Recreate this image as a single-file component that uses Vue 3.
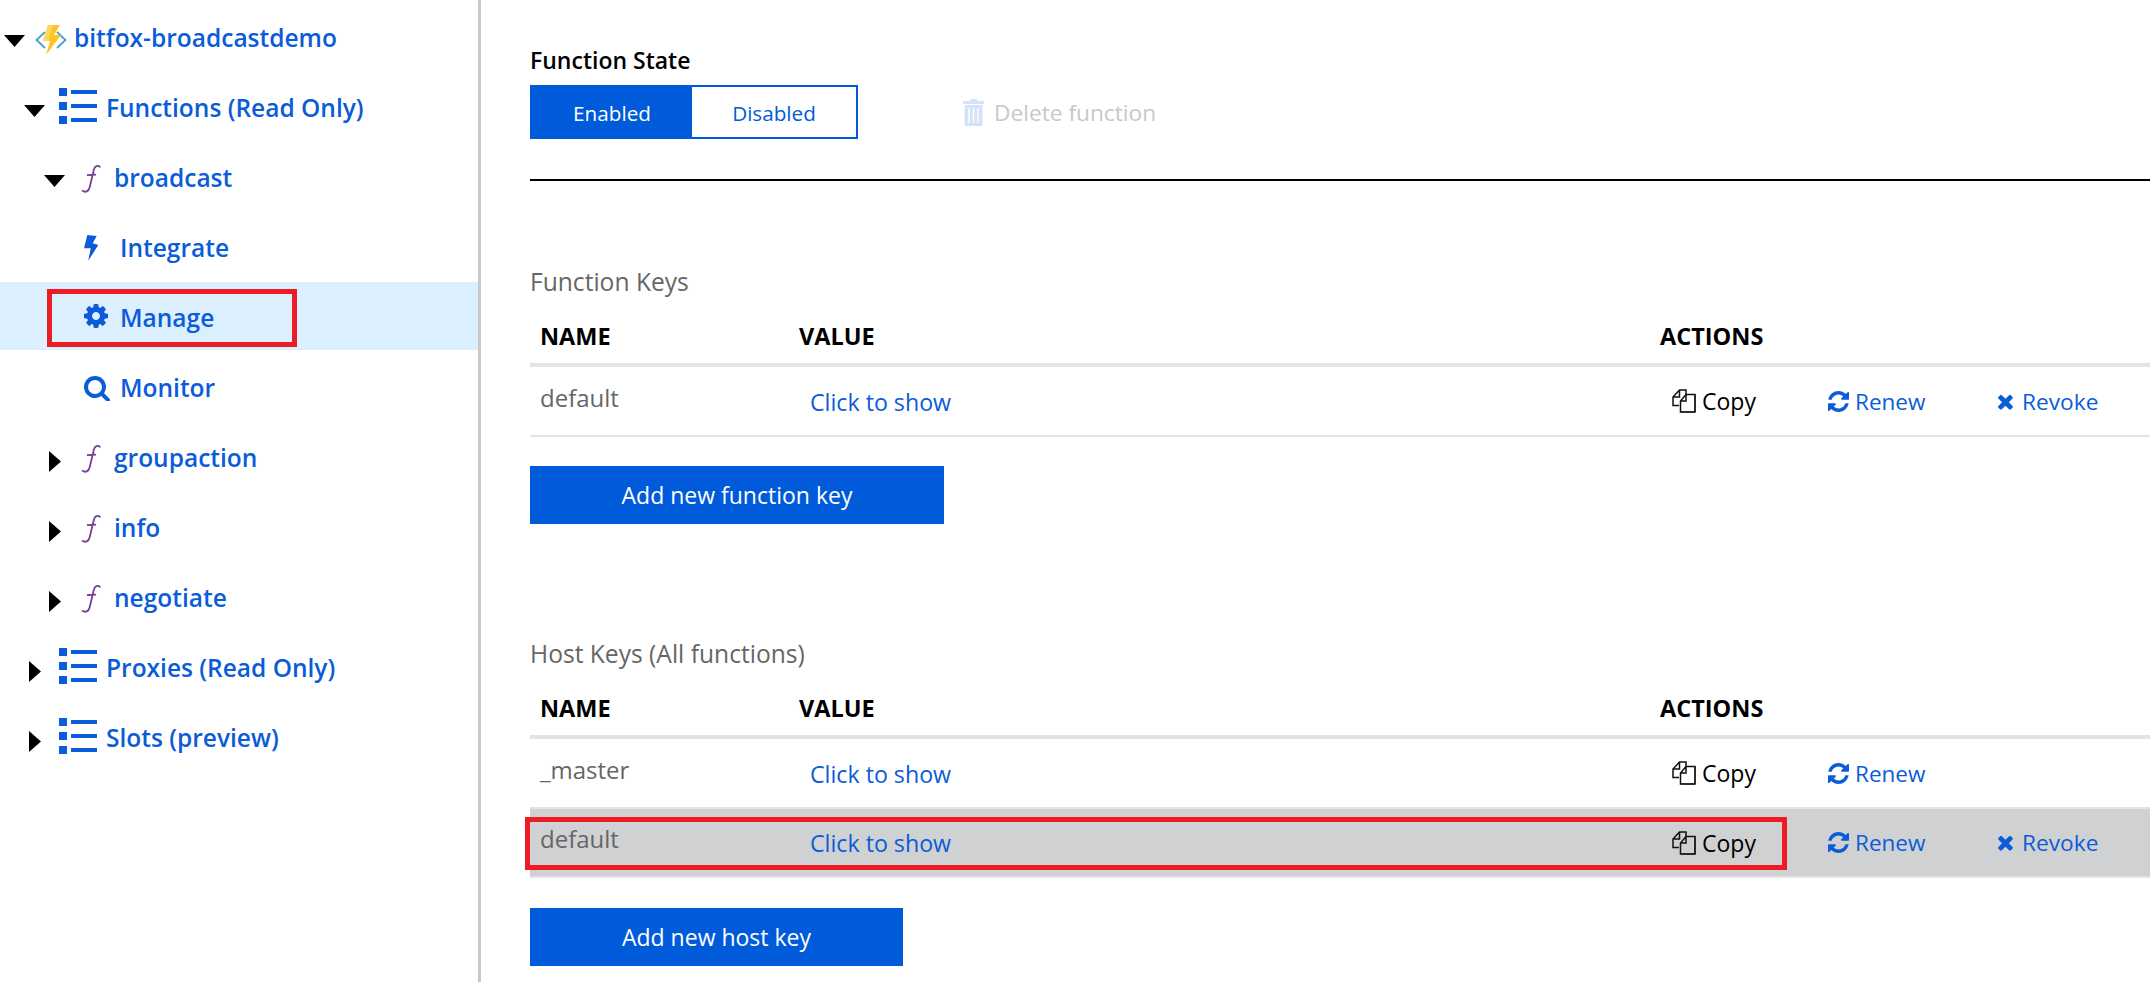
<template>
  <div class="page">
    <aside class="sidebar">
      <div
        v-for="item in tree"
        :key="item.label"
        class="tree-row"
        :class="[`depth-${item.depth}`, { selected: item.selected }]"
      >
        <span v-if="item.open !== undefined" class="caret">
          <svg v-if="item.open" width="21" height="12" viewBox="0 0 21 12"><path d="M0 0h21L10.500 12z" /></svg>
          <svg v-else width="12" height="21" viewBox="0 0 12 21"><path d="M0 0l12 10.500L0 21z" /></svg>
        </span>

        <svg v-if="item.icon === 'app'" class="icon-app" viewBox="0 0 32 30">
          <path d="M10 7L1.500 15l8.500 8M22 7l8.500 8-8.500 8" fill="none" stroke="#4aa0cf" stroke-width="1.800" />
          <path d="M13 0h12l-6 10h7L11 30l4-14H8z" fill="#fcc526" />
          <path d="M13 0h5l-5 16H8z" fill="#fdd85c" />
        </svg>
        <svg v-else-if="item.icon === 'list'" class="icon-list" viewBox="0 0 38 36">
          <path d="M0 0h8v8H0zM0 14h8v8H0zM0 28h8v8H0zM12 2h26v4H12zM12 16h26v4H12zM12 30h26v4H12z" />
        </svg>
        <svg v-else-if="item.icon === 'fn'" class="icon-fn" viewBox="0 0 20 28">
          <path d="M19.500 2.200C16.500-.2 13.800 1 12.800 5L8.600 22.500C7.600 26.500 4.600 28 1 25.600M6 10.200l9-.6" fill="none" stroke="#7a3f96" stroke-width="1.800" />
        </svg>
        <svg v-else-if="item.icon === 'bolt'" class="icon-bolt" viewBox="0 0 15 26">
          <path d="M3.300 0l9.400 1-4 7.300 5.600 1.700-10 15.700 2.400-12.400H0z" />
        </svg>
        <svg v-else-if="item.icon === 'gear'" class="icon-gear" viewBox="128 128 1536 1536"><path :d="gearPath" /></svg>
        <svg v-else-if="item.icon === 'search'" class="icon-search" viewBox="64 64 1664 1664"><path :d="searchPath" /></svg>

        <span class="tree-label">{{ item.label }}</span>
        <span v-if="item.selected" class="callout manage-callout"></span>
      </div>
    </aside>

    <main class="content">
      <section class="state">
        <h3 class="state-title">Function State</h3>
        <div class="state-controls">
          <div class="toggle">
            <span class="toggle-on">Enabled</span>
            <span class="toggle-off">Disabled</span>
          </div>
          <span class="delete">
            <svg class="delete-icon" viewBox="0 0 21 27">
              <path d="M7 0h7v2h7v3H0V2h7zM1.500 6h18v19.500a1.500 1.500 0 0 1-1.500 1.500H3a1.500 1.500 0 0 1-1.500-1.500z" fill="#d3e3f9" />
              <path d="M6 9v15M10.500 9v15M15 9v15" stroke="#fff" stroke-width="1.400" />
            </svg>
            Delete function
          </span>
        </div>
      </section>

      <section v-for="group in groups" :key="group.title" class="keys" :class="group.cls">
        <h4 class="keys-title">{{ group.title }}</h4>
        <div class="key-row key-head">
          <div class="cell-name">NAME</div>
          <div class="cell-value">VALUE</div>
          <div class="cell-actions">ACTIONS</div>
        </div>
        <div
          v-for="row in group.rows"
          :key="row.name"
          class="key-row key-body"
          :class="{ active: row.active }"
        >
          <div class="cell-name">{{ row.name }}</div>
          <div class="cell-value"><a class="link">Click to show</a></div>
          <div class="cell-actions">
            <span class="action copy">
              <svg class="icon-copy" viewBox="0 0 24 24">
                <path d="M7 16.500H1V8l6.500-7H14v4.500M7.500 1v7H1" fill="none" stroke="#111" stroke-width="1.500" />
                <path d="M14 5.500h9V23H8.500V12zM14 5.500V12H8.500" fill="none" stroke="#111" stroke-width="1.500" />
                <path d="M9 23h14V6" fill="none" stroke="#111" stroke-width="1" />
              </svg>
              Copy
            </span>
            <span class="action renew">
              <svg class="icon-renew" viewBox="128 128 1536 1536"><path :d="refreshPath" /></svg>
              Renew
            </span>
            <span v-if="row.revoke" class="action revoke">
              <svg class="icon-revoke" viewBox="220 220 1360 1360"><path :d="closePath" /></svg>
              Revoke
            </span>
          </div>
          <span v-if="row.active" class="callout row-callout"></span>
        </div>
        <button class="add-button">{{ group.button }}</button>
      </section>
    </main>
  </div>
</template>

<script setup>
const tree = [
  { label: 'bitfox-broadcastdemo', depth: 0, open: true, icon: 'app' },
  { label: 'Functions (Read Only)', depth: 1, open: true, icon: 'list' },
  { label: 'broadcast', depth: 2, open: true, icon: 'fn' },
  { label: 'Integrate', depth: 3, icon: 'bolt' },
  { label: 'Manage', depth: 3, icon: 'gear', selected: true },
  { label: 'Monitor', depth: 3, icon: 'search' },
  { label: 'groupaction', depth: 2, open: false, icon: 'fn' },
  { label: 'info', depth: 2, open: false, icon: 'fn' },
  { label: 'negotiate', depth: 2, open: false, icon: 'fn' },
  { label: 'Proxies (Read Only)', depth: 1, open: false, icon: 'list' },
  { label: 'Slots (preview)', depth: 1, open: false, icon: 'list' },
]

const groups = [
  {
    title: 'Function Keys',
    cls: 'function-keys',
    button: 'Add new function key',
    rows: [{ name: 'default', revoke: true }],
  },
  {
    title: 'Host Keys (All functions)',
    cls: 'host-keys',
    button: 'Add new host key',
    rows: [
      { name: '_master', revoke: false },
      { name: 'default', revoke: true, active: true },
    ],
  },
]

const gearPath = 'M1152 896q0-106-75-181t-181-75-181 75-75 181 75 181 181 75 181-75 75-181zm512-109v222q0 12-8 23t-20 13l-185 28q-19 54-39 91 35 50 107 138 10 12 10 25t-9 23q-27 37-99 108t-94 71q-12 0-26-9l-138-108q-44 23-91 38-16 136-29 186-7 28-36 28h-222q-14 0-24.500-8.500t-11.500-21.500l-28-184q-49-16-90-37l-141 107q-10 9-25 9-14 0-25-11-126-114-165-168-7-10-7-23 0-12 8-23 15-21 51-66.500t54-70.500q-27-50-41-99l-183-27q-13-2-21-12.500t-8-23.500v-222q0-12 8-23t19-13l186-28q14-46 39-92-40-57-107-138-10-12-10-24 0-10 9-23 26-36 98.500-107.500t94.500-71.500q13 0 26 10l138 107q44-23 91-38 16-136 29-186 7-28 36-28h222q14 0 24.500 8.500t11.500 21.500l28 184q49 16 90 37l142-107q9-9 24-9 13 0 25 10 129 119 165 170 7 8 7 22 0 12-8 23-15 21-51 66.500t-54 70.500q26 50 41 98l183 28q13 2 21 12.500t8 23.500z'
const searchPath = 'M1216 832q0-185-131.500-316.500t-316.500-131.500-316.500 131.500-131.500 316.500 131.500 316.500 316.500 131.500 316.500-131.500 131.500-316.500zm512 832q0 52-38 90t-90 38q-54 0-90-38l-343-342q-179 124-399 124-143 0-273.500-55.500t-225-150-150-225-55.500-273.500 55.500-273.500 150-225 225-150 273.500-55.500 273.500 55.500 225 150 150 225 55.500 273.500q0 220-124 399l343 343q37 37 37 90z'
const refreshPath = 'M1639 1056q0 5-1 7-64 268-268 434.500t-478 166.500q-146 0-282.500-55t-243.500-157l-129 129q-19 19-45 19t-45-19-19-45v-448q0-26 19-45t45-19h448q26 0 45 19t19 45-19 45l-137 137q71 66 161 102t187 36q134 0 250-65t186-179q11-17 53-117 8-23 30-23h192q13 0 22.500 9.500t9.500 22.500zm25-800v448q0 26-19 45t-45 19h-448q-26 0-45-19t-19-45 19-45l138-138q-148-137-349-137-134 0-250 65t-186 179q-11 17-53 117-8 23-30 23h-199q-13 0-22.500-9.500t-9.500-22.500v-7q65-268 270-434.500t480-166.500q146 0 284 55.500t245 156.500l130-129q19-19 45-19t45 19 19 45z'
const closePath = 'M1490 1322q0 40-28 68l-136 136q-28 28-68 28t-68-28l-294-294-294 294q-28 28-68 28t-68-28l-136-136q-28-28-28-68t28-68l294-294-294-294q-28-28-28-68t28-68l136-136q28-28 68-28t68 28l294 294 294-294q28-28 68-28t68 28l136 136q28 28 28 68t-28 68l-294 294 294 294q28 28 28 68z'
</script>

<style>
html, body {
  margin: 0;
  background: #fff;
}
</style>

<style scoped>
.page {
  display: flex;
  height: 982px;
  overflow: hidden;
  font-family: "Open Sans", "Noto Sans", sans-serif;
  font-size: 23px;
}

/* arbol lateral */
.sidebar {
  width: 478px;
  flex-shrink: 0;
  padding-top: 2px;
  border-right: 3px solid #c8c8c8;
}

.tree-row {
  position: relative;
  display: flex;
  align-items: center;
  height: 68px;
  margin-bottom: 2px;
  color: #0a5cd8;
  font-size: 24.500px;
  font-weight: 600;
}
.tree-row svg { fill: #0a5cd8; flex-shrink: 0; }
.tree-row.selected { background: #dcefff; }
.tree-label { position: relative; top: 1px; margin-left: -1px; }

.depth-0 { padding-left: 4px; }
.depth-1 { padding-left: 24px; }
.depth-2 { padding-left: 44px; }
.depth-3 { padding-left: 84px; }

.caret {
  width: 21px;
  height: 21px;
  margin-top: 10px;
  display: flex;
  align-items: center;
  justify-content: center;
}
.caret svg { fill: #000; }

.icon-app { width: 32px; height: 30px; margin: 8px 8px 0 10px; }
.icon-list { width: 38px; height: 36px; margin: 0 10px 0 14px; }
.icon-fn { width: 20px; height: 28px; margin: 6px 14px 0 16px; }
.icon-bolt { width: 15px; height: 26px; margin: 4px 22px 0 0; }
.icon-gear { width: 24px; height: 24px; margin-right: 13px; }
.icon-search { width: 26px; height: 26px; margin: 4px 11px 0 0; }

.callout {
  position: absolute;
  border: 5px solid #ed1c24;
  box-sizing: border-box;
  pointer-events: none;
}
.manage-callout { left: 47px; top: 7px; width: 250px; height: 58px; }

/* contenido */
.content {
  flex: 1;
  min-width: 0;
  padding: 47px 0 0 49px;
}

.state { border-bottom: 2px solid #000; height: 134px; box-sizing: border-box; }
.state-title {
  margin: 0;
  height: 38px;
  line-height: 26px;
  font-size: 23px;
  font-weight: 600;
  color: #000;
}
.state-controls { display: flex; align-items: center; }

.toggle {
  display: flex;
  width: 328px;
  height: 54px;
  box-sizing: border-box;
  border: 2px solid #005bdb;
  font-size: 20.700px;
}
.toggle span {
  flex: 1;
  display: flex;
  align-items: center;
  justify-content: center;
  padding-top: 1px;
}
.toggle-on { flex: 0 0 160px !important; background: #005bdb; color: #fff; }
.toggle-off { background: #fff; color: #005bdb; }

.delete {
  display: flex;
  align-items: center;
  gap: 10px;
  margin-left: 105px;
  color: #c8c8c8;
  font-size: 22.700px;
}
.delete-icon { width: 21px; height: 27px; }

.keys-title {
  margin: 0;
  font-size: 24.600px;
  font-weight: 400;
  color: #666;
  line-height: 28px;
  height: 47px;
}
.function-keys { padding-top: 87px; }
.host-keys { padding-top: 116px; }

.key-row {
  position: relative;
  display: flex;
  align-items: center;
}
.key-head {
  height: 42px;
  padding-bottom: 6px;
  border-bottom: 4px solid #e4e4e4;
  font-size: 23.500px;
  font-weight: 700;
  color: #000;
}
.key-body {
  height: 68px;
  border-bottom: 2px solid #e4e4e4;
  color: #666;
  font-size: 24px;
}
.key-body.active { background: #d0d1d3; height: 67px; }

.cell-name { width: 258px; padding-left: 10px; box-sizing: border-box; flex-shrink: 0; }
.cell-value { width: 872px; flex-shrink: 0; }
.key-body .cell-name { margin-top: -8px; }
.key-body .cell-value { padding-left: 22px; box-sizing: border-box; }
.key-head .cell-value { padding-left: 11px; box-sizing: border-box; }
.cell-actions { display: flex; align-items: center; }
.link { color: #0a5cd8; font-size: 23.200px; }

.action { display: flex; align-items: center; font-size: 23px; }
.copy { width: 156px; color: #000; gap: 6px; margin-left: 12px; }
.renew { width: 169px; color: #0a5cd8; gap: 6px; font-size: 22.500px; }
.revoke { color: #0a5cd8; gap: 8px; font-size: 22.700px; }
.icon-copy { width: 24px; height: 24px; }
.icon-renew { width: 21px; height: 21px; fill: #0a5cd8; }
.icon-revoke { width: 17px; height: 17px; fill: #0a5cd8; }

.row-callout { left: -5px; top: 8px; width: 1262px; height: 53px; }

.add-button {
  display: block;
  height: 58px;
  margin-top: 29px;
  border: none;
  background: #005bdb;
  color: #fff;
  font-family: inherit;
  font-size: 23px;
}
.host-keys .add-button { margin-top: 30px; }
.function-keys .add-button { width: 414px; }
.host-keys .add-button { width: 373px; }
</style>
